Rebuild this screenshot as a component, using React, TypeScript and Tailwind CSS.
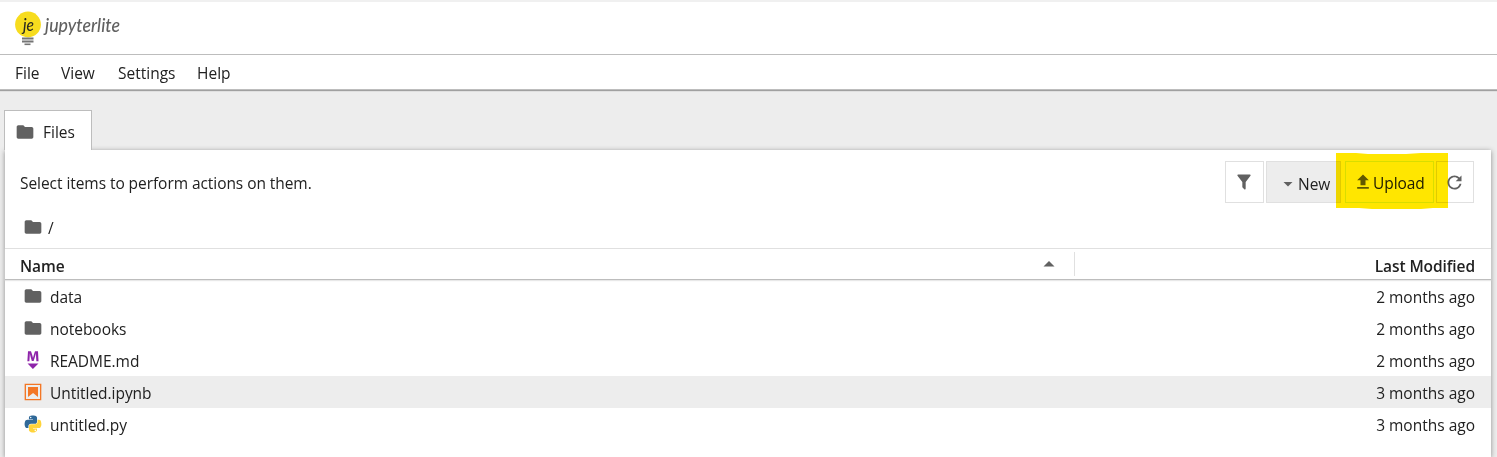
import React from 'react';

type Kind = 'folder' | 'markdown' | 'notebook' | 'python';

function Folder() {
  return (
    <svg className="h-5 w-5 shrink-0" viewBox="0 0 24 24" fill="#616161">
      <path d="M10 4H4c-1.1 0-1.99.9-1.99 2L2 18c0 1.1.9 2 2 2h16c1.1 0 2-.9 2-2V8c0-1.100-.9-2-2-2h-8l-2-2z" />
    </svg>
  );
}

function FileIcon({ kind }: { kind: Kind }) {
  if (kind === 'folder') return <Folder />;
  if (kind === 'markdown')
    return (
      <svg className="h-5 w-5 shrink-0" viewBox="0 0 22 22" fill="#8e24aa">
        <path d="M5 14.900h12l-6.100 6zm9.400-6.800c0-1.300-.1-2.900-.1-4.500-.4 1.400-.9 2.900-1.300 4.300l-1.300 4.300h-2L8.500 7.900c-.4-1.300-.7-2.900-1-4.300-.1 1.600-.1 3.200-.2 4.600L7 12.400H4.800l.7-11h3.300L10 5c.4 1.200.7 2.700 1 3.900.3-1.200.7-2.600 1-3.900l1.200-3.700h3.300l.6 11h-2.400l-.3-4.200z" />
      </svg>
    );
  if (kind === 'notebook')
    return (
      <svg className="h-5 w-5 shrink-0" viewBox="0 0 22 22" fill="#f37726">
        <path d="M18.700 3.300v15.400H3.300V3.300h15.400m1.500-1.500H1.800v18.300h18.300l.1-18.300z" />
        <path d="M16.500 16.500l-5.400-4.300-5.600 4.300v-11h11z" />
      </svg>
    );
  return (
    <svg className="h-5 w-5 shrink-0" viewBox="-10 -10 131.161 132.389">
      <path
        fill="#306998"
        d="M54.919 0c-4.584.022-8.961.413-12.813 1.095C30.760 3.099 28.700 7.295 28.700 15.032v10.219h26.812v3.406H18.637c-7.792 0-14.616 4.684-16.750 13.594-2.462 10.213-2.571 16.586 0 27.250 1.906 7.938 6.458 13.594 14.250 13.594h9.219v-12.250c0-8.850 7.657-16.656 16.750-16.656h26.781c7.455 0 13.406-6.138 13.406-13.625v-25.531c0-7.266-6.130-12.725-13.406-13.938C64.282.328 59.502-.020 54.919 0zm-14.500 8.220c2.770 0 5.031 2.298 5.031 5.125 0 2.816-2.262 5.093-5.031 5.093-2.779 0-5.031-2.277-5.031-5.093 0-2.827 2.252-5.125 5.031-5.125z"
      />
      <path
        fill="#ffd43b"
        d="M85.638 28.657v11.906c0 9.231-7.826 17-16.750 17H42.106c-7.336 0-13.406 6.279-13.406 13.625V96.720c0 7.266 6.319 11.540 13.406 13.625 8.488 2.496 16.627 2.947 26.781 0 6.750-1.954 13.406-5.888 13.406-13.625V86.500H55.512v-3.405h40.188c7.792 0 10.696-5.435 13.406-13.594 2.799-8.399 2.680-16.476 0-27.250-1.926-7.757-5.604-13.594-13.406-13.594H85.638zM70.575 93.313c2.779 0 5.031 2.277 5.031 5.094 0 2.827-2.252 5.125-5.031 5.125-2.770 0-5.031-2.298-5.031-5.125 0-2.816 2.262-5.094 5.031-5.094z"
      />
    </svg>
  );
}

function Logo() {
  return (
    <svg className="h-[40px] w-[140px] overflow-visible" viewBox="0 0 140 40">
      <circle cx="14" cy="16.500" r="12.900" fill="#f7dc1e" />
      <path d="M8 30.500h11.500M8 33.500h11.500" stroke="#757575" strokeWidth="1.800" />
      <path d="M10.500 36.300h6" stroke="#757575" strokeWidth="1.600" />
      <text x="9" y="22.500" fontFamily="Lato, sans-serif" fontStyle="italic" fontWeight="500" fontSize="18" textLength="11" lengthAdjust="spacingAndGlyphs" fill="#2b2b20">
        je
      </text>
      <text x="31" y="23.500" fontFamily="Lato, sans-serif" fontStyle="italic" fontWeight="500" fontSize="20" textLength="75" lengthAdjust="spacingAndGlyphs" fill="#616161">
        jupyterlite
      </text>
    </svg>
  );
}

const files: { name: string; kind: Kind; modified: string; selected?: boolean }[] = [
  { name: 'data', kind: 'folder', modified: '2 months ago' },
  { name: 'notebooks', kind: 'folder', modified: '2 months ago' },
  { name: 'README.md', kind: 'markdown', modified: '2 months ago' },
  { name: 'Untitled.ipynb', kind: 'notebook', modified: '3 months ago', selected: true },
  { name: 'untitled.py', kind: 'python', modified: '3 months ago' },
];

export default function App() {
  return (
    <div className="flex h-[457px] w-[1497px] flex-col overflow-hidden bg-[#ededed] font-['Open_Sans',sans-serif] text-[15.500px] leading-5 text-[#212121]">
      <header className="h-[55px] shrink-0 border-t-2 border-b border-t-[#f0f0f0] border-b-[#bdbdbd] bg-white pt-[6px] pl-[14px]">
        <Logo />
      </header>
      <nav className="flex h-[35px] shrink-0 items-center border-b border-[#bdbdbd] bg-white pt-[2px] pl-[15px] shadow-[0_1px_1px_#a0a0a0]">
        <span className="w-[46px]">File</span>
        <span className="w-[57px]">View</span>
        <span className="w-[79px]">Settings</span>
        <span>Help</span>
      </nav>

      <div className="flex h-[60px] shrink-0 items-end pl-1">
        <div className="relative z-10 flex h-[40px] w-[88px] items-center border border-b-0 border-[#bdbdbd] bg-white pt-[2px] pl-[10px]">
          <Folder />
          <span className="ml-[8px]">Files</span>
        </div>
      </div>

      <main className="mr-[6px] ml-[5px] flex flex-1 flex-col bg-white shadow-[0_1px_5px_#8a8a8a]">
        <div className="flex h-[65px] shrink-0 items-center pr-[17px] pb-px pl-[15px]">
          <span className="flex-1 pt-[2px] tracking-[-0.060px]">Select items to perform actions on them.</span>
          <div className="relative flex h-[42px]">
            <button className="mr-[2px] flex w-[39px] items-center justify-center border border-[#e0e0e0] pr-px">
              <svg className="h-5 w-5" viewBox="0 0 24 24" fill="#616161">
                <path d="M14 12v7.880c.040.300-.060.620-.290.830-.390.390-1.020.390-1.410 0l-2.010-2.010c-.230-.230-.330-.540-.290-.830V12h-.030L4.210 4.620c-.340-.430-.260-1.060.170-1.400C4.570 3.080 4.780 3 5 3h14c.220 0 .430.080.620.220.430.340.510.970.170 1.400L14.030 12H14z" />
              </svg>
            </button>
            <button className="mr-1 flex w-[75px] items-center border border-[#e0e0e0] bg-[#ededed] pl-[15px]">
              <svg className="mt-[3px] h-3 w-3" viewBox="0 0 12 12" fill="#616161">
                <path d="M1.500 4h9L6 8.500z" />
              </svg>
              <span className="ml-1 pt-[3px]">New</span>
            </button>
            <button className="mr-[2px] flex w-[89px] items-center border border-[#d8f5e0] pl-[7px]">
              <svg className="h-5 w-5" viewBox="0 0 24 24" fill="#616161">
                <path d="M9 16h6v-6h4l-7-7-7 7h4zm-4 2h14v2H5z" />
              </svg>
              <span className="pt-px tracking-[-0.060px]">Upload</span>
            </button>
            <button className="flex w-[38px] items-center justify-center border border-[#e0e0e0] pr-px">
              <svg className="h-[21px] w-[21px]" viewBox="0 0 18 18" fill="#616161">
                <path d="M9 13.500c-2.490 0-4.500-2.010-4.500-4.500S6.510 4.500 9 4.500c1.240 0 2.360.520 3.170 1.330L10 8h5V3l-1.760 1.760C12.150 3.680 10.660 3 9 3 5.690 3 3.010 5.690 3.010 9S5.690 15 9 15c2.970 0 5.430-2.160 5.900-5h-1.520c-.460 2-2.240 3.500-4.380 3.500z" />
              </svg>
            </button>
            <svg className="pointer-events-none absolute top-[-8px] left-[111px] h-14 w-28 mix-blend-multiply" viewBox="0 0 112 56" fill="#ffe600">
              <path d="M0 0h20l12 1h38l15-1h27v55H97l-12 1H36l-13-1H0z" />
            </svg>
          </div>
        </div>
        <div className="flex h-[33px] shrink-0 items-center pb-[9px] pl-[18px]">
          <Folder />
          <span className="ml-[5px] pt-[2px]">/</span>
        </div>
        <div className="flex h-8 shrink-0 items-center border-t border-b border-t-[#e0e0e0] border-b-[#bdbdbd] pr-4 pl-[15px] font-semibold tracking-[-0.080px] shadow-[0_1px_1px_#e8e8e8]">
          <span className="flex-1 pt-[4px]">Name</span>
          <svg className="mr-[19px] h-3 w-3" viewBox="0 0 12 12" fill="#616161">
            <path d="M.5 8.500h11L6 3z" />
          </svg>
          <div className="h-6 w-px bg-[#e0e0e0]" />
          <span className="w-[400px] pt-[4px] text-right">Last Modified</span>
        </div>
        <div className="flex flex-col">
          {files.map((f) => (
            <div key={f.name} className={`flex h-8 items-center pr-4 pl-[18px] ${f.selected ? 'bg-[#ededed]' : ''}`}>
              <FileIcon kind={f.kind} />
              <span className="ml-[7px] flex-1 pt-[2px] tracking-[-0.040px]">{f.name}</span>
              <span className="pt-[2px]">{f.modified}</span>
            </div>
          ))}
        </div>
      </main>
    </div>
  );
}
